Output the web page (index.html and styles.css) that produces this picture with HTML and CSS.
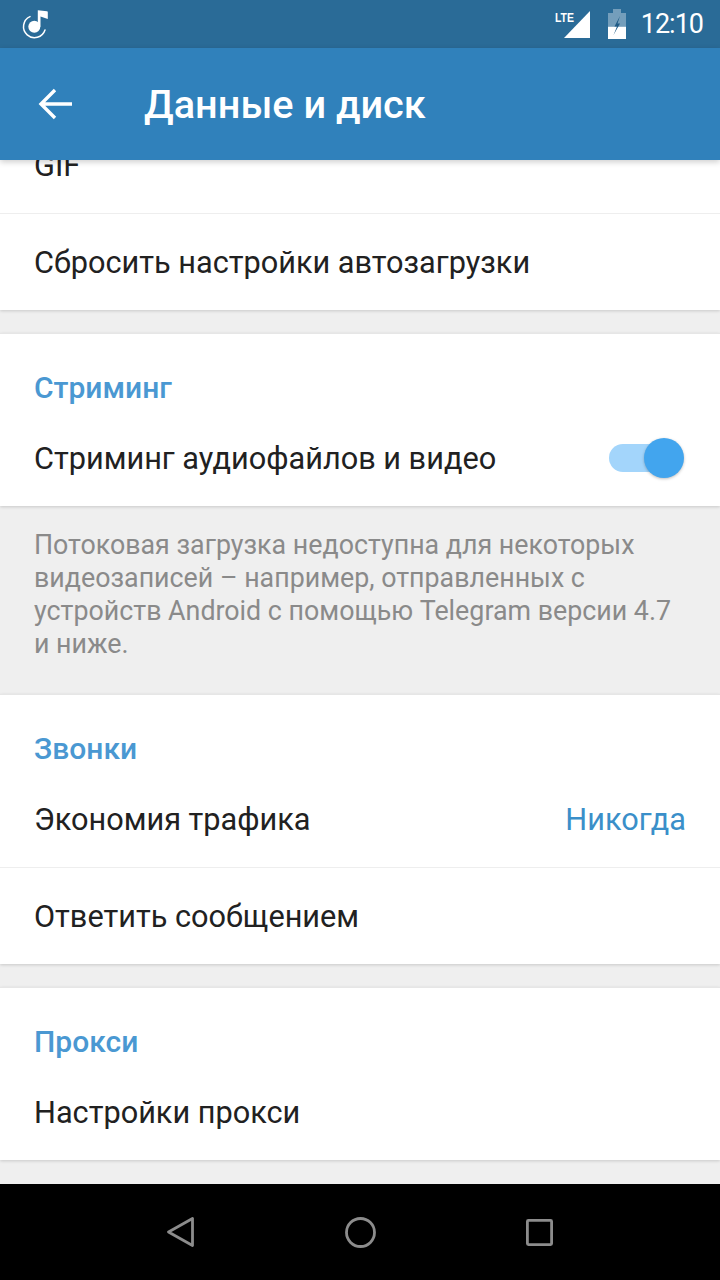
FILE: index.html
```html
<!DOCTYPE html>
<html lang="ru">
<head>
    <meta charset="UTF-8">
    <meta name="viewport" content="width=device-width, initial-scale=1.0">
    <title>Данные и диск</title>
    <link rel="stylesheet" href="styles.css">
</head>
<body>
    <div class="phone">
        <div class="status-bar">
            <svg class="music-icon" width="32" height="32" viewBox="0 0 32 32">
                <path d="M10 8.6 A11 11 0 1 0 25 22" fill="none" stroke="#fff" stroke-width="1.5" stroke-linecap="round"/>
                <circle cx="14.3" cy="18.7" r="6" fill="#fff"/>
                <path d="M17.8 18.7 V2.2 L27 3.2 Q27.8 3.3 27.8 4.2 V11 L20.5 8.5 V18.7 Z" fill="#fff"/>
            </svg>
            <div class="status-right">
                <svg class="signal-icon" width="36" height="30" viewBox="0 0 36 30">
                    <path d="M35 2 V29 H9 Z" fill="#fff"/>
                    <text class="lte-label" x="0" y="13" textLength="19" lengthAdjust="spacingAndGlyphs">LTE</text>
                </svg>
                <svg class="battery-icon" width="18" height="30" viewBox="0 0 18 30">
                    <path d="M5 0 H13 V4 H18 V17.7 H0 V4 H5 Z" fill="#fff" fill-opacity="0.35"/>
                    <path d="M0 17.7 H18 V30 H0 Z" fill="#fff"/>
                    <path d="M12 7 L6.5 17.5 H9 L5.5 26 L12 14.5 H9.5 Z" fill="#1f5a85"/>
                </svg>
                <span class="clock">12:10</span>
            </div>
        </div>

        <header class="app-bar">
            <svg class="back-icon" width="36" height="36" viewBox="0 0 36 36">
                <path d="M34 18 H4 M17 4 L3 18 L17 32" fill="none" stroke="#fff" stroke-width="3.4"/>
            </svg>
            <h1 class="title">Данные и диск</h1>
        </header>

        <main class="content">
            <section class="card card-first">
                <div class="row row-line">GIF</div>
                <div class="row">Сбросить настройки автозагрузки</div>
            </section>
            <div class="gap"></div>

            <section class="card">
                <h2 class="section-title">Стриминг</h2>
                <div class="row">
                    <span>Стриминг аудиофайлов и видео</span>
                    <span class="switch"><span class="switch-knob"></span></span>
                </div>
            </section>
            <p class="note">Потоковая загрузка недоступна для некоторых видеозаписей – например, отправленных с устройств Android с помощью Telegram версии 4.7 и ниже.</p>

            <section class="card">
                <h2 class="section-title">Звонки</h2>
                <div class="row row-line">
                    <span>Экономия трафика</span>
                    <span class="row-value">Никогда</span>
                </div>
                <div class="row">Ответить сообщением</div>
            </section>
            <div class="gap"></div>

            <section class="card">
                <h2 class="section-title">Прокси</h2>
                <div class="row">Настройки прокси</div>
            </section>
            <div class="gap"></div>
        </main>

        <nav class="nav-bar">
            <svg width="27" height="30" viewBox="0 0 27 30">
                <path d="M25.5 1.5 V28.5 L1.5 15 Z" fill="none" stroke="#8c8c8c" stroke-width="2.8" stroke-linejoin="round"/>
            </svg>
            <svg width="31" height="31" viewBox="0 0 31 31">
                <circle cx="15.5" cy="15.5" r="14" fill="none" stroke="#8c8c8c" stroke-width="2.8"/>
            </svg>
            <svg width="27" height="27" viewBox="0 0 27 27">
                <rect x="1.4" y="1.4" width="24.2" height="24.2" rx="1" fill="none" stroke="#8c8c8c" stroke-width="2.8"/>
            </svg>
        </nav>
    </div>
</body>
</html>
```

FILE: styles.css
```css
* {
    box-sizing: border-box;
}

body {
    margin: 0;
    font-family: Roboto, "Noto Sans", sans-serif;
    background: #000;
}

.phone {
    width: 720px;
    height: 1280px;
    display: flex;
    flex-direction: column;
    overflow: hidden;
    background: #efefef;
}

.status-bar {
    height: 48px;
    flex-shrink: 0;
    display: flex;
    align-items: center;
    justify-content: space-between;
    padding: 0 17px 0 20px;
    background: #2a6b97;
    position: relative;
    z-index: 2;
}

.status-right {
    display: flex;
    align-items: center;
    gap: 15px;
}

.signal-icon {
    margin-right: 2px;
}

.lte-label {
    font-family: "Liberation Sans", sans-serif;
    font-size: 13px;
    font-weight: bold;
    fill: #fff;
}

.clock {
    color: #fff;
    font-size: 27px;
    letter-spacing: -1px;
}

.app-bar {
    height: 112px;
    flex-shrink: 0;
    display: flex;
    align-items: center;
    padding-left: 38px;
    background: #3081bb;
    box-shadow: 0 2px 6px rgba(0, 0, 0, 0.2);
    position: relative;
    z-index: 2;
}

.title {
    margin: 0 0 0 70px;
    color: #fff;
    font-size: 39.7px;
    font-weight: 500;
}

.content {
    flex: 1;
    min-height: 0;
}

.card {
    background: #fff;
    border-top: 1px solid #e6e6e6;
    box-shadow: 0 1px 3px rgba(0, 0, 0, 0.16);
}

.card-first {
    margin-top: -44px;
}

.gap {
    height: 23px;
}

.row {
    height: 96px;
    display: flex;
    align-items: center;
    justify-content: space-between;
    padding: 0 34px;
    color: #212121;
    font-size: 30.7px;
}

.row-line {
    height: 97px;
    border-bottom: 1px solid #eee;
}

.row-value {
    color: #3a8fc9;
}

.section-title {
    margin: 0;
    height: 76px;
    padding: 36px 34px 0;
    color: #4a98d2;
    font-size: 30px;
    font-weight: 500;
    line-height: 36px;
}

.switch {
    width: 69px;
    height: 28px;
    border-radius: 14px;
    background: #a3d5fb;
    margin-right: 8px;
    position: relative;
}

.switch-knob {
    position: absolute;
    top: -6px;
    right: -6px;
    width: 40px;
    height: 40px;
    border-radius: 50%;
    background: #42a5ee;
    box-shadow: 0 1px 3px rgba(0, 0, 0, 0.25);
}

.note {
    margin: 0;
    height: 188px;
    padding: 23px 34px 0;
    color: #8a8a8a;
    font-size: 26.8px;
    line-height: 33.1px;
}

.nav-bar {
    height: 96px;
    flex-shrink: 0;
    display: flex;
    align-items: center;
    justify-content: space-between;
    padding: 0 167px;
    background: #000;
}
```
